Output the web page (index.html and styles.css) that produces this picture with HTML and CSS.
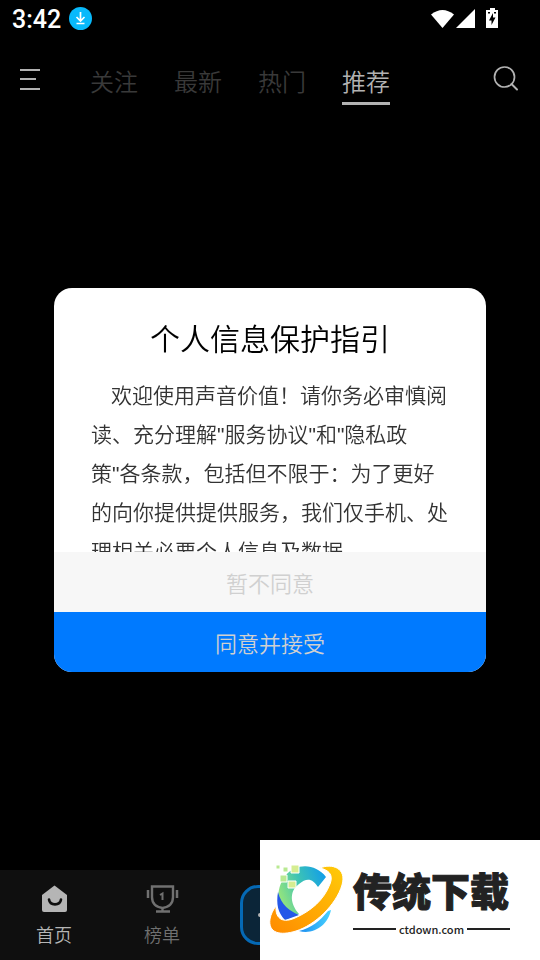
FILE: index.html
```html
<!DOCTYPE html>
<html lang="zh-CN">
<head>
    <meta charset="UTF-8">
    <meta name="viewport" content="width=device-width, initial-scale=1.0">
    <title>声音价值</title>
    <link rel="stylesheet" href="styles.css">
</head>
<body>

<div class="status-bar">
    <span class="clock">3:42</span>
    <svg class="download-icon" width="24" height="24" viewBox="0 0 24 24">
        <circle cx="11.500" cy="11.500" r="11.500" fill="#08b9fb"/>
        <path d="M11.500 5v9M7.500 10l4 4 4-4M7.500 16.500h8" fill="none" stroke="#fff" stroke-width="1.700"/>
    </svg>
    <svg class="system-icons" width="69" height="20" viewBox="0 0 69 20">
        <path d="M0 5.500Q11.500-3.500 23 5.500L11.500 19z" fill="#fff"/>
        <path d="M44 0v19H25z" fill="#fff"/>
        <path d="M59 -1h5v2h3v18H55V1h4z" fill="#fff"/>
        <path d="M62 4l-4 7.500h2.500V16l4-7.500H62zM57 3h2v1.500h-2zM63 3h2v1.500h-2z" fill="#000"/>
    </svg>
</div>

<header class="top-bar">
    <button type="button" class="icon-button" aria-label="菜单">
        <svg width="20" height="24" viewBox="0 0 20 24">
            <path d="M0 4h20M0 13h16M0 23h20" stroke="#b2b2b2" stroke-width="2"/>
        </svg>
    </button>
    <nav class="tabs">
        <a href="#follow">关注</a>
        <a href="#new">最新</a>
        <a href="#hot">热门</a>
        <a href="#recommend" class="active">推荐</a>
    </nav>
    <button type="button" class="icon-button" aria-label="搜索">
        <svg width="28" height="26" viewBox="0 0 28 26">
            <circle cx="12.500" cy="12" r="10" fill="none" stroke="#b2b2b2" stroke-width="1.700"/>
            <path d="M19.500 19l5.500 5.500" stroke="#b2b2b2" stroke-width="2" stroke-linecap="round"/>
        </svg>
    </button>
</header>

<main class="content">
    <section class="dialog" role="dialog" aria-labelledby="guideTitle">
        <h1 id="guideTitle">个人信息保护指引</h1>
        <p class="dialog-text">欢迎使用声音价值！请你务必审慎阅读、充分理解"服务协议"和"隐私政策"各条款，包括但不限于：为了更好的向你提供提供服务，我们仅手机、处理相关必要个人信息及数据</p>
        <button type="button" class="refuse">暂不同意</button>
        <button type="button" class="accept">同意并接受</button>
    </section>
</main>

<nav class="bottom-nav">
    <a href="#home" class="active">
        <svg width="28" height="28" viewBox="0 0 28 28">
            <path d="M14.500 0.500L27 10v15q0 2-2 2H4q-2 0-2-2V10z" fill="#b5b5b5"/>
            <path d="M9 14.500c1 6.500 11 6.500 12 0" fill="none" stroke="#0f0f0f" stroke-width="2.600" stroke-linecap="round"/>
        </svg>
        首页
    </a>
    <a href="#rank">
        <svg width="32" height="28" viewBox="0 0 32 28">
            <path d="M6 1.500h21V12c0 6-4 10-10.500 11C10 22 6 18 6 12zM16.500 23v3M10 26.500h14" fill="none" stroke="#707070" stroke-width="2.400"/>
            <path d="M2 5v8M31 5v8" stroke="#707070" stroke-width="2.500"/>
            <path d="M14 10l2.500-1.500V15" fill="none" stroke="#707070" stroke-width="2"/>
        </svg>
        榜单
    </a>
    <button type="button" class="add" aria-label="发布">
        <svg width="28" height="28" viewBox="0 0 28 28">
            <path d="M4 14h20M14 4v20" stroke="#b5b5b5" stroke-width="4" stroke-linecap="round"/>
        </svg>
    </button>
</nav>

<aside class="site-logo">
    <svg width="76" height="72" viewBox="0 0 76 72">
        <defs>
            <linearGradient id="ring" x1="0" y1="1" x2="1" y2="0">
                <stop offset="0" stop-color="#ff8a00"/>
                <stop offset="1" stop-color="#ffcb08"/>
            </linearGradient>
            <linearGradient id="arc" x1="0" y1="0.600" x2="1" y2="0.200">
                <stop offset="0" stop-color="#9be779"/>
                <stop offset="0.500" stop-color="#3cc3b5"/>
                <stop offset="1" stop-color="#129ee9"/>
            </linearGradient>
            <linearGradient id="tail" x1="0" y1="0" x2="1" y2="0">
                <stop offset="0" stop-color="#1b8cf0"/>
                <stop offset="1" stop-color="#48d2ff"/>
            </linearGradient>
        </defs>
        <!-- letter C behind the ring -->
        <path d="M57 13C46-1 27-1 16 12 6 26 8 44 16 56L30 50C21 40 20 27 30 20c8-7 14-5 19 3z" fill="url(#arc)"/>
        <path d="M9 28c3 13 12 19 21 23L16 56C9 49 7 40 9 28z" fill="#2458e8"/>
        <path d="M30 67c12-3 21-10 29-20l3-1c-3 15-17 25-32 21z" fill="url(#tail)"/>
        <path d="M51 4C63-1 78 4 73 21 67 41 46 61 27 67 11 72-1 69 1 55c1-5 3-9 6-13-1 14 8 17 19 12C42 47 55 36 61 20 65 10 59 6 51 4z" fill="url(#ring)" stroke="#fff" stroke-width="1"/>
        <g stroke="#fff">
            <path d="M22 1h8v8h-8zM19 17h8v7h-8z" fill="#d5ed91"/>
            <path d="M11 11h7v7h-7zM14 3h5v5h-5zM7 1h4v4H7z" fill="#b9e992"/>
        </g>
    </svg>
    <div class="site-name">
        <strong>传统下载</strong>
        <span class="site-url">ctdown.com</span>
    </div>
</aside>

</body>
</html>
```
FILE: styles.css
```css
* {
    box-sizing: border-box;
}

body {
    font-family: "Noto Sans CJK SC", sans-serif;
    font-weight: 350;
    background-color: #000;
    color: #b2b2b2;
    margin: 0;
    min-height: 100vh;
    display: flex;
    flex-direction: column;
}

a {
    color: inherit;
    text-decoration: none;
}

button {
    font: inherit;
    border: none;
    padding: 0;
    background: none;
    cursor: pointer;
}

svg {
    display: block;
    flex-shrink: 0;
    overflow: visible;
}

.status-bar {
    display: flex;
    align-items: center;
    height: 38px;
    padding: 0 40px 0 12px;
}

.clock {
    font-family: Roboto, sans-serif;
    font-size: 25px;
    font-weight: 500;
    color: #fff;
}

.download-icon {
    margin-left: 8px;
}

.system-icons {
    margin-left: auto;
}

.top-bar {
    display: flex;
    align-items: center;
    height: 80px;
    padding: 0 20px;
}

.tabs {
    display: flex;
    flex: 1;
    gap: 36px;
    margin-left: 50px;
    padding-top: 12px;
    font-size: 24px;
    line-height: 34px;
    color: #393939;
}

.tabs a {
    padding-bottom: 4px;
    border-bottom: 3px solid transparent;
}

.tabs .active {
    color: #b2b2b2;
    border-color: #b2b2b2;
}

/* The dialog is centered on the whole window */
.content {
    position: fixed;
    inset: 0;
    display: flex;
    align-items: center;
    justify-content: center;
}

.dialog {
    width: 80%;
    display: flex;
    flex-direction: column;
    background-color: #fff;
    border-radius: 18px;
    overflow: hidden;
}

.dialog h1 {
    margin: 0;
    padding-top: 28px;
    font-size: 30px;
    font-weight: 350;
    line-height: 42px;
    text-align: center;
    color: #000;
}

.dialog-text {
    margin: 18px 0 0;
    padding: 0 37px;
    height: 176px;
    overflow: hidden;
    font-family: "Liberation Sans", "Noto Sans CJK SC", sans-serif;
    font-size: 21px;
    line-height: 39px;
    text-indent: 20px;
    color: #333;
}

.dialog button {
    height: 60px;
    font-size: 22px;
}

.refuse {
    background-color: #f7f7f7;
    color: #d0d0d0;
}

.accept {
    background-color: #007aff;
    color: #d0d0d0;
}

.bottom-nav {
    display: grid;
    grid-template-columns: repeat(5, 1fr);
    align-items: center;
    justify-items: center;
    height: 90px;
    margin-top: auto;
    background-color: #0f0f0f;
    font-size: 18px;
    line-height: 26px;
    color: #707070;
}

.bottom-nav a {
    display: flex;
    flex-direction: column;
    align-items: center;
    gap: 8px;
    padding-top: 2px;
}

.bottom-nav .active {
    color: #b5b5b5;
}

.add {
    display: flex;
    align-items: center;
    justify-content: center;
    width: 60px;
    height: 60px;
    border: 3px solid #0569b5;
    border-radius: 18px;
    background-color: #0b2538;
}

.site-logo {
    position: fixed;
    right: 0;
    bottom: 0;
    display: flex;
    align-items: center;
    gap: 8px;
    width: 280px;
    height: 120px;
    padding: 0 30px 0 9px;
    background-color: #fff;
    color: #222;
}

.site-name {
    flex: 1;
}

.site-name strong {
    display: block;
    font-size: 39px;
    font-weight: 900;
    line-height: 58px;
    white-space: nowrap;
    -webkit-text-stroke: 1px #222;
}

.site-url {
    display: flex;
    align-items: center;
    gap: 3px;
    font-size: 11px;
    font-weight: 500;
    line-height: 22px;
}

.site-url::before,
.site-url::after {
    content: "";
    flex: 1;
    height: 2px;
    background-color: #222;
}
```
